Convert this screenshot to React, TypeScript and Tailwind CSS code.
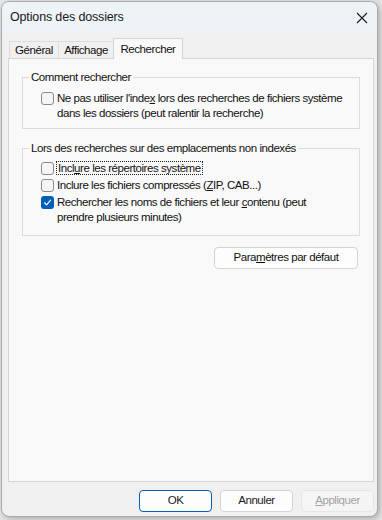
import React from "react";

const font = "font-['Liberation_Sans',Arial,sans-serif]";

function Box({ checked }: { checked?: boolean }) {
  if (checked) {
    return (
      <span className="mt-[1px] flex h-[13px] w-[13px] shrink-0 items-center justify-center rounded-[3px] bg-[#005fb8]">
        <svg width="9" height="9" viewBox="0 0 9 9">
          <polyline points="1.5,4.8 3.6,6.8 7.6,2.2" fill="none" stroke="#ffffff" strokeWidth="1.2" strokeLinecap="round" strokeLinejoin="round" />
        </svg>
      </span>
    );
  }
  return <span className="mt-[1px] h-[13px] w-[13px] shrink-0 rounded-[3px] border border-[#8b8b8b] bg-[#f5f5f5]" />;
}

function Row({ checked, children }: { checked?: boolean; children: React.ReactNode }) {
  return (
    <div className="flex items-start gap-[3px]">
      <Box checked={checked} />
      <div className="leading-[15px]">{children}</div>
    </div>
  );
}

function Tab({ label, active, w }: { label: string; active?: boolean; w: string }) {
  return (
    <div
      className={
        active
          ? `${w} relative z-10 -mb-px flex h-[21px] items-center justify-center border border-b-0 border-[#d5d5d5] bg-[#f9f9f9] pt-[1px]`
          : `${w} flex h-[17px] items-center justify-center border border-b-0 border-[#dcdcdc] bg-[#f0f0f0] pt-[2px]`
      }
    >
      {label}
    </div>
  );
}

function Btn({ children, variant }: { children: React.ReactNode; variant?: "default" | "disabled" }) {
  const cls =
    variant === "default"
      ? "border-[#005fb8] bg-[#fdfdfd] text-[#1b1b1b]"
      : variant === "disabled"
      ? "border-[#e6e6e6] bg-[#f5f5f5] text-[#a2a2a2]"
      : "border-[#d3d3d3] bg-[#fdfdfd] text-[#1b1b1b]";
  return (
    <div className={`flex h-[22px] w-[73px] items-center justify-center rounded-[4px] border ${cls}`}>{children}</div>
  );
}

export default function App() {
  return (
    <div className={`h-[520px] w-[382px] bg-[#e6e6e6] pl-px pt-px ${font} text-[11.5px] tracking-[-0.45px] text-[#111111]`}>
      <div className="flex h-[516px] w-[377px] flex-col overflow-hidden rounded-[8px] border border-[#a9a9a9] bg-[#f0f0f0] shadow-[2px_2px_6px_rgba(0,0,0,0.25)]">
        <div className="flex h-[31px] shrink-0 items-center justify-between bg-[#eef3f8] pl-[8px] pr-[7px]">
          <span className="text-[12.5px] tracking-[-0.15px] text-[#1a1a1a]">Options des dossiers</span>
          <svg width="12" height="12" viewBox="0 0 12 12" className="mr-[2px]">
            <path d="M1 1 L11 11 M11 1 L1 11" stroke="#1a1a1a" strokeWidth="1.1" fill="none" />
          </svg>
        </div>
        <div className="flex flex-1 flex-col pl-[6px] pr-[3px] pt-[5px]">
          <div className="flex items-end pl-px">
            <Tab label="Général" w="w-[50px]" />
            <Tab label="Affichage" w="w-[56px] -ml-px" />
            <Tab label="Rechercher" active w="w-[70px] -ml-px" />
          </div>
          <div className="flex h-[424px] flex-col border border-[#d5d5d5] bg-[#f9f9f9] px-[13px] pt-[11px]">
            <fieldset className="border border-[#dcdcdc] pb-[7px]">
              <legend className="ml-[6px] px-[2px] leading-[15px]">Comment rechercher</legend>
              <div className="mt-[6px] pl-[18px]">
                <Row>
                  Ne pas utiliser l'inde<span className="underline">x</span> lors des recherches de fichiers système
                  <br />
                  dans les dossiers (peut ralentir la recherche)
                </Row>
              </div>
            </fieldset>
            <fieldset className="mt-[12px] border border-[#dcdcdc] pb-[10px]">
              <legend className="ml-[6px] px-[2px] leading-[15px]">Lors des recherches sur des emplacements non indexés</legend>
              <div className="mt-[5px] flex flex-col gap-[2px] pl-[18px]">
                <Row>
                  <span className="-ml-px border border-dotted border-[#222222] px-px">
                    Incl<span className="underline">u</span>re les répertoires système
                  </span>
                </Row>
                <Row>
                  Inclure les fichiers compressés (<span className="underline">Z</span>IP, CAB...)
                </Row>
                <Row checked>
                  Rechercher les noms de fichiers et leur <span className="underline">c</span>ontenu (peut
                  <br />
                  prendre plusieurs minutes)
                </Row>
              </div>
            </fieldset>
            <div className="mt-[11px] flex justify-end pr-[2px]">
              <div className="flex h-[22px] w-[144px] items-center justify-center rounded-[4px] border border-[#d3d3d3] bg-[#fdfdfd]">
                Para<span className="underline">m</span>ètres par défaut
              </div>
            </div>
          </div>
          <div className="mt-[8px] flex justify-end gap-[8px]">
            <Btn variant="default">OK</Btn>
            <Btn>Annuler</Btn>
            <Btn variant="disabled">
              <span className="underline">A</span>ppliquer
            </Btn>
          </div>
        </div>
      </div>
    </div>
  );
}
